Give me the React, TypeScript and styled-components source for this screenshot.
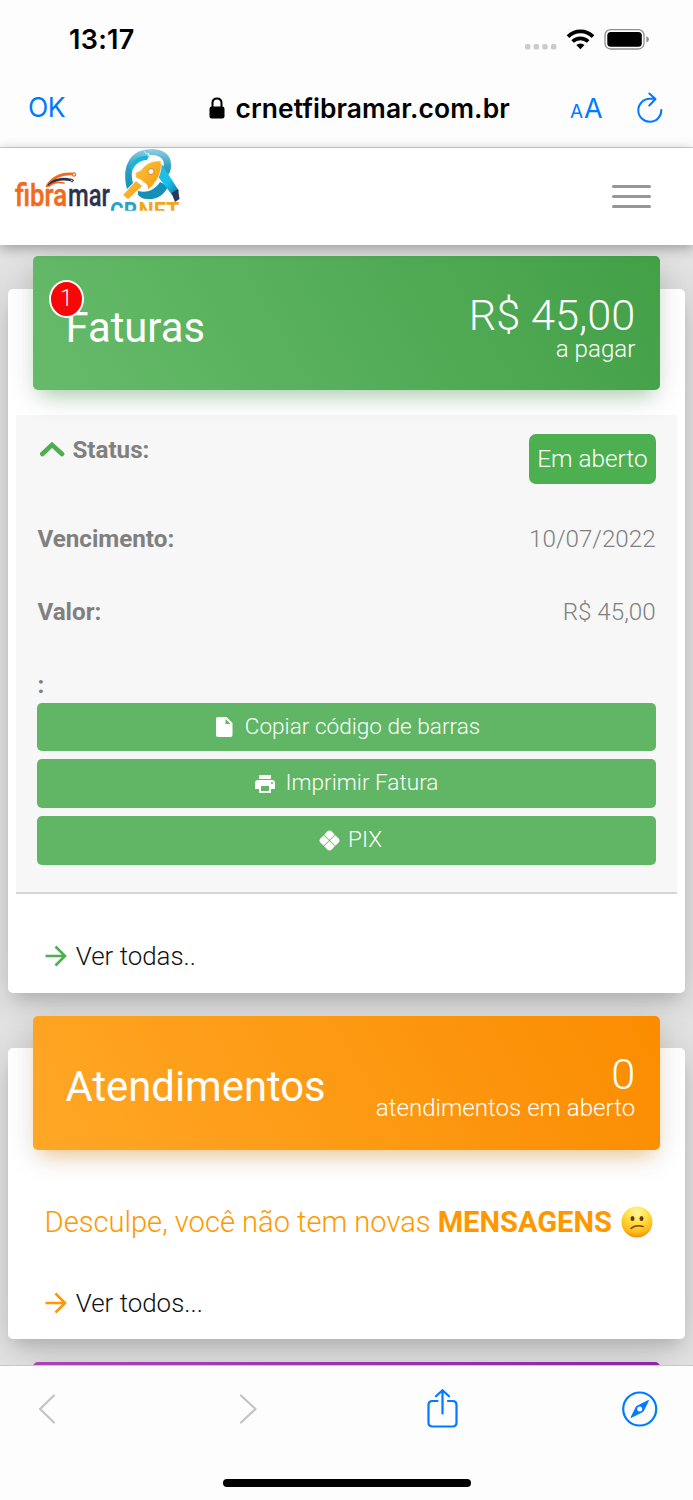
import React from "react";
import styled, { createGlobalStyle } from "styled-components";

const Global = createGlobalStyle`
  * { box-sizing: border-box; }
  body { margin: 0; background: #fdfdfd; }
`;

const Screen = styled.div`
  width: 693px;
  height: 1500px;
  display: flex;
  flex-direction: column;
  overflow: hidden;
  font-family: Roboto, sans-serif;
  font-weight: 300;
  background: #fdfdfd;
`;

const StatusBar = styled.div`
  flex: none;
  height: 80px;
  padding: 0 44px 0 69px;
  display: flex;
  align-items: center;
  justify-content: space-between;
  font: 600 27px/80px Inter, sans-serif;
  color: #000;
`;

const Clock = styled.span`
  letter-spacing: 0.3px;
`;

const StatusIcons = styled.div`
  display: flex;
  align-items: center;
  height: 80px;
`;

const AddressBar = styled.div`
  flex: none;
  height: 68px;
  padding: 0 30px 0 28px;
  display: grid;
  grid-template-columns: 180px 1fr 34px 59px;
  align-items: center;
  border-bottom: 1px solid #d2d2d2;
  font-family: Inter, sans-serif;
  font-weight: 400;
  color: #007aff;
`;

const Done = styled.span`
  font-size: 26.5px;
  line-height: 54px;
  padding-bottom: 14px;
  letter-spacing: -0.5px;
`;

const Host = styled.div`
  display: flex;
  align-items: center;
  gap: 10.500px;
  padding-bottom: 13px;
  color: #000;
  font-weight: 600;
  font-size: 26.400px;
  letter-spacing: 0.1px;
  white-space: nowrap;
`;

const TextSize = styled.div`
  display: flex;
  align-items: baseline;
  gap: 1px;
  padding-bottom: 12px;
  font-size: 27px;
`;

const SmallA = styled.span`
  font-size: 19px;
`;

const Reload = styled.div`
  display: flex;
  justify-content: flex-end;
  padding-bottom: 14px;
`;

const SiteHeader = styled.header`
  flex: none;
  position: relative;
  z-index: 2;
  height: 97px;
  padding: 0 42px 0 14px;
  display: flex;
  align-items: flex-start;
  justify-content: space-between;
  background: #fff;
  box-shadow: 0 3px 12px rgba(0, 0, 0, 0.32);
`;

const Burger = styled.div`
  margin-top: 37px;
  width: 39px;
  display: grid;
  gap: 7px;
`;

const BurgerLine = styled.span`
  height: 3px;
  border-radius: 2px;
  background: #969696;
`;

const Page = styled.main`
  flex: 1;
  min-height: 0;
  overflow: hidden;
  padding: 43.5px 8px 0;
  background: #e2e2e2;
`;

const Card = styled.section<{ $height: number }>`
  height: ${(p) => p.$height}px;
  margin-bottom: 55px;
  padding: 0 8px;
  border-radius: 5px;
  background: #fff;
  box-shadow: 0 6px 40px rgba(0, 0, 0, 0.14), 0 12px 16px -6px rgba(0, 0, 0, 0.15);
`;

const CardHeader = styled.div<{ $from: string; $to: string; $glow: string }>`
  position: relative;
  top: -32.5px;
  height: 134.3px;
  margin: 0 16.7px -8px 16.5px;
  padding: 0 25px 0 33px;
  display: flex;
  justify-content: space-between;
  border-radius: 5px;
  color: #fff;
  background: linear-gradient(60deg, ${(p) => p.$from}, ${(p) => p.$to});
  box-shadow: 0 7px 32px rgba(0, 0, 0, 0.1), 0 12px 18px -8px ${(p) => p.$glow};
`;

const Title = styled.h2`
  margin: 0;
  padding-top: 46.600px;
  font-size: 41.8px;
  line-height: 50px;
  font-weight: 400;
`;

const Summary = styled.div`
  padding-top: 34.600px;
  text-align: right;
`;

const Amount = styled.div`
  font-size: 43.3px;
  line-height: 50px;
`;

const Caption = styled.div`
  margin-top: -7px;
  font-size: 24.1px;
  line-height: 30px;
`;

const Badge = styled.span`
  position: absolute;
  left: 16.5px;
  top: 24px;
  width: 35px;
  height: 38px;
  border: 2px solid #fff;
  border-radius: 50%;
  background: #f90606;
  font-size: 23px;
  line-height: 34px;
  text-align: center;
`;

const Invoice = styled.div`
  height: 479px;
  padding: 19px 21.4px 0;
  background: #f7f7f7;
  border-bottom: 2px solid #d6d6d6;
  color: #808080;
`;

const Row = styled.div<{ $height: number }>`
  height: ${(p) => p.$height}px;
  display: flex;
  justify-content: space-between;
  align-items: flex-start;
  font-size: 24.2px;
  line-height: 33px;
`;

const Label = styled.b`
  font-weight: 700;
  display: flex;
  align-items: center;
  gap: 7px;
`;

const Chip = styled.span`
  width: 126.5px;
  height: 50px;
  border-radius: 7px;
  background: #4caf50;
  color: #fff;
  font-size: 24.3px;
  line-height: 49px;
  text-align: center;
`;

const Action = styled.button<{ $indent?: number }>`
  display: flex;
  align-items: center;
  justify-content: center;
  width: 100%;
  height: 48.6px;
  margin: 0 0 8.1px;
  padding: 0 0 0 ${(p) => p.$indent ?? 0}px;
  border: 0;
  border-radius: 5px;
  background: #60b664;
  color: #fff;
  font: 300 22.6px/46px Roboto, sans-serif;
`;

const ActionText = styled.span`
  padding-bottom: 1px;
`;

const Footer = styled.div<{ $top: number }>`
  margin-top: ${(p) => p.$top}px;
  padding-left: 28.8px;
  display: flex;
  align-items: center;
  gap: 8px;
  font-size: 25.900px;
  line-height: 36px;
  color: #111;
`;

const Notice = styled.p`
  margin: 28px 0 0;
  padding-left: 28.6px;
  display: flex;
  align-items: center;
  white-space: pre;
  font-size: 29.1px;
  line-height: 40px;
  color: #ff9800;

  b { font-weight: 700; }
`;

const BottomBar = styled.nav`
  flex: none;
  position: relative;
  z-index: 2;
  height: 135px;
  padding: 21px 35px 0 38px;
  display: grid;
  grid-template-rows: 44px 1fr;
  grid-template-columns: 201px 188px 1fr 36px;
  align-items: center;
  border-top: 1px solid #c8c8c8;
  background: #fdfdfd;
`;

const HomeIndicator = styled.div`
  grid-column: 1 / -1;
  align-self: end;
  width: 248px;
  height: 8px;
  margin: 0 0 13px 185px;
  border-radius: 4px;
  background: #000;
`;

const Arrow = ({ color }: { color: string }) => (
  <svg width="23" height="22" viewBox="0 0 23 22" fill="none" stroke={color} strokeWidth="2.600">
    <path d="M0.500 11H20M10.500 1.500L20 11L10.500 20.500" />
  </svg>
);

const Logo = () => (
  <svg width="170" height="90" viewBox="14 148 170 90">
    <defs>
      <linearGradient id="ring" x1="0" y1="0" x2="0" y2="1">
        <stop offset="0" stopColor="#8fd0e2" />
        <stop offset=".45" stopColor="#2f9fc0" />
        <stop offset="1" stopColor="#0f93bd" />
      </linearGradient>
      <linearGradient id="leg" x1="0" y1="0" x2="1" y2="1">
        <stop offset="0" stopColor="#2bb4d6" />
        <stop offset=".55" stopColor="#16c3ee" />
        <stop offset="1" stopColor="#1a6f9f" />
      </linearGradient>
      <linearGradient id="gold" x1="0" y1="0" x2="1" y2="1">
        <stop offset="0" stopColor="#ffc33a" />
        <stop offset="1" stopColor="#f39a10" />
      </linearGradient>
      <clipPath id="crop"><rect x="108" y="148" width="76" height="62.800" /></clipPath>
    </defs>
    <g fontFamily="Roboto, sans-serif" fontWeight="500" fontSize="31">
      <text x="15" y="206" fill="#f26a1b" stroke="#f26a1b" strokeWidth=".5" textLength="52" lengthAdjust="spacingAndGlyphs">fibra</text>
      <text x="68" y="206" fill="#2b3350" stroke="#2b3350" strokeWidth=".3" textLength="42" lengthAdjust="spacingAndGlyphs">mar</text>
    </g>
    <g fill="none" strokeLinecap="round">
      <path d="M47 186C53 177 61 173 73 174" stroke="#f26a1b" strokeWidth="2.600" />
      <path d="M49 185C55 179 62 178 71 180" stroke="#2b3350" strokeWidth="2.600" />
      <path d="M49 186C54 182 58 182 64 183" stroke="#f26a1b" strokeWidth="1.700" />
      <circle cx="74" cy="174.500" r="1.600" stroke="#f26a1b" strokeWidth="1.200" fill="#fff" />
      <circle cx="72" cy="180.500" r="1.300" stroke="#2b3350" strokeWidth="1" fill="#fff" />
    </g>
    <g clipPath="url(#crop)">
      <path d="M127 189C122 172 127 152 146 149.500C160 147 172 153 171 166C171 171 169 175 165 177L160 171C164 168 165 163 162 159C158 154 150 154 143 157C132 162 130 174 133 183Z" fill="url(#ring)" />
      <path d="M138 191C146 193 154 191 160 182L168 186C165 195 156 200 147 199C143 199 140 197 138 195Z" fill="#1490b8" />
      <path d="M143 149.500L150 157L149 153L146 154Z" fill="#fff" />
      <path d="M157 166L161 163L179 191L172 195L156 174Z" fill="url(#leg)" />
      <path d="M129 168C133 159 141 155 149 156L147 160C140 160 135 164 132 171Z" fill="#18b4e0" />
      <path d="M171.500 193L178 189L179.500 199L175 202Z" fill="#26375d" />
      <path d="M123 195L136 181L142 186L128 199Z" fill="url(#gold)" />
      <path d="M161 161C151 160 145 165 141 170L135 173L136 178L141 180L147 185L148 190L153 185C159 178 162 171 161 161Z" fill="url(#gold)" stroke="#fff" strokeWidth=".7" />
      <circle cx="151" cy="171.500" r="3" fill="#fff" stroke="#c98a2c" strokeWidth="1" />
      <g fontFamily="Roboto, sans-serif" fontWeight="700" fontSize="24">
        <text x="110" y="218.500" fill="#2aa2c2" textLength="27" lengthAdjust="spacingAndGlyphs">CR</text>
        <text x="138.500" y="218.500" fill="#f3a61b" textLength="41" lengthAdjust="spacingAndGlyphs">NET</text>
      </g>
    </g>
  </svg>
);

const ConfusedFace = () => (
  <svg width="32" height="32" viewBox="0 0 32 32">
    <defs>
      <radialGradient id="face" cx=".5" cy=".2" r=".85">
        <stop offset="0" stopColor="#fffa9a" />
        <stop offset=".4" stopColor="#ffe045" />
        <stop offset=".78" stopColor="#fdb717" />
        <stop offset="1" stopColor="#e07e0c" />
      </radialGradient>
    </defs>
    <circle cx="16" cy="16" r="15.500" fill="url(#face)" />
    <ellipse cx="11.500" cy="12.500" rx="2" ry="2.600" fill="#6a3507" />
    <ellipse cx="20.500" cy="12.500" rx="2" ry="2.600" fill="#6a3507" />
    <path d="M10 22.500C13 19.500 18 19.300 22 20.500" fill="none" stroke="#7d430b" strokeWidth="1.500" strokeLinecap="round" />
  </svg>
);

const Spacer = styled.span<{ $w: number }>`
  flex: none;
  width: ${(p) => p.$w}px;
`;

export default function App() {
  return (
    <Screen>
      <Global />
      <StatusBar>
        <Clock>13:17</Clock>
        <StatusIcons>
          <svg width="125" height="24" viewBox="524 28 125 24">
            <g fill="#cbcbcb">
              <rect x="525" y="44" width="5.500" height="5.500" rx="1.800" />
              <rect x="533.600" y="44" width="5.500" height="5.500" rx="1.800" />
              <rect x="542.200" y="44" width="5.500" height="5.500" rx="1.800" />
              <rect x="550.900" y="44" width="5.500" height="5.500" rx="1.800" />
            </g>
            <g fill="none" stroke="#000" strokeWidth="3.700">
              <path d="M568 36.600A17.500 17.500 0 0 1 593 36.600" />
              <path d="M572.600 41.500A11.500 11.500 0 0 1 588.200 41.500" />
            </g>
            <path d="M580.400 49.200L576.300 45A6 6 0 0 1 584.500 45Z" />
            <rect x="605" y="29.700" width="39" height="19.300" rx="5.500" fill="none" stroke="#8f8f8f" strokeWidth="1.300" />
            <rect x="607.300" y="32" width="34.500" height="14.800" rx="3.500" />
            <path d="M646.300 36.200Q649 37 649 39.300T646.300 42.400Z" fill="#8f8f8f" />
          </svg>
        </StatusIcons>
      </StatusBar>
      <AddressBar>
        <Done>OK</Done>
        <Host>
          <svg width="17" height="22" viewBox="0 0 17 22">
            <rect x="1.500" y="9.500" width="15" height="12" rx="2.200" />
            <path d="M4.500 10V6Q4.500 1.500 9 1.500T13.500 6V10" fill="none" stroke="#000" strokeWidth="2" />
          </svg>
          crnetfibramar.com.br
        </Host>
        <TextSize><SmallA>A</SmallA>A</TextSize>
        <Reload>
          <svg width="26" height="31" viewBox="0 0 26 31" fill="none" stroke="#007aff" strokeWidth="2" strokeLinecap="round" strokeLinejoin="round">
            <path d="M24.300 18A11.500 11.500 0 1 1 12.800 6.800H18M12.300 1.500L18.500 7L12.300 13.500" />
          </svg>
        </Reload>
      </AddressBar>
      <SiteHeader>
        <Logo />
        <Burger><BurgerLine /><BurgerLine /><BurgerLine /></Burger>
      </SiteHeader>
      <Page>
        <Card $height={704.5}>
          <CardHeader $from="#66bb6a" $to="#43a047" $glow="rgba(76,175,80,.4)">
            <Title>Faturas</Title>
            <Badge>1</Badge>
            <Summary>
              <Amount>R$ 45,00</Amount>
              <Caption>a pagar</Caption>
            </Summary>
          </CardHeader>
          <Invoice>
            <Row $height={89}>
              <Label>
                <svg width="28" height="18" viewBox="0 0 28 18" fill="none" stroke="#4caf50" strokeWidth="4.600">
                  <path d="M5.300 13L15 3.800L25 13" strokeLinecap="round" />
                </svg>
                Status:
              </Label>
              <Chip>Em aberto</Chip>
            </Row>
            <Row $height={73}><Label>Vencimento:</Label><span>10/07/2022</span></Row>
            <Row $height={73}><Label>Valor:</Label><span>R$ 45,00</span></Row>
            <Row $height={34}><Label>:</Label></Row>
            <Action $indent={3}>
              <svg width="17" height="20" viewBox="0 0 17 20">
                <path d="M2 0H10.500L16.500 6V18Q16.500 20 14.500 20H2Q0 20 0 18V2Q0 0 2 0Z" fill="#fff" />
                <path d="M9.500 2V7H14.500" fill="#60b664" />
              </svg>
              <Spacer $w={12} /><ActionText>Copiar código de barras</ActionText>
            </Action>
            <Action>
              <svg width="20" height="18" viewBox="0 0 20 18">
                <path d="M4 0H16V4H4ZM3 5H17Q20 5 20 8V14H16V18H4V14H0V8Q0 5 3 5Z" fill="#fff" />
                <rect x="6" y="11" width="8" height="5" fill="#60b664" />
                <circle cx="17" cy="8" r="1" fill="#60b664" />
              </svg>
              <Spacer $w={11} /><ActionText>Imprimir Fatura</ActionText>
            </Action>
            <Action $indent={8}>
              <svg width="21" height="21" viewBox="0 0 21 21">
                <g transform="rotate(45 10.500 10.500)" fill="#fff">
                  <path d="M5.800 2.600H10.100V10.100H2.600V5.800Q2.600 2.600 5.800 2.600Z" />
                  <path d="M10.900 2.600H15.200Q18.400 2.600 18.400 5.800V10.100H10.900Z" />
                  <path d="M2.600 10.900H10.100V18.400H5.800Q2.600 18.400 2.600 15.200Z" />
                  <path d="M10.900 10.900H18.400V15.200Q18.400 18.400 15.200 18.400H10.900Z" />
                </g>
              </svg>
              <Spacer $w={8} /><ActionText>PIX</ActionText>
            </Action>
          </Invoice>
          <Footer $top={44.5}><Arrow color="#4caf50" />Ver todas..</Footer>
        </Card>
        <Card $height={291}>
          <CardHeader $from="#ffa726" $to="#fb8c00" $glow="rgba(255,152,0,.4)">
            <Title>Atendimentos</Title>
            <Summary>
              <Amount>0</Amount>
              <Caption>atendimentos em aberto</Caption>
            </Summary>
          </CardHeader>
          <Notice>
            <span>Desculpe, você não tem novas <b>MENSAGENS</b></span>
            <Spacer $w={9} />
            <ConfusedFace />
          </Notice>
          <Footer $top={43}><Arrow color="#ff9800" />Ver todos...</Footer>
        </Card>
        <Card $height={100}>
          <CardHeader $from="#ab47bc" $to="#8e24aa" $glow="rgba(156,39,176,.4)" />
        </Card>
      </Page>
      <BottomBar>
        <svg width="20" height="32" viewBox="0 0 20 32" fill="none" stroke="#c4c4c4" strokeWidth="2.300" strokeLinecap="round" strokeLinejoin="round">
          <path d="M16 2.500L2 16L16 29.500" />
        </svg>
        <svg width="20" height="32" viewBox="0 0 20 32" fill="none" stroke="#c4c4c4" strokeWidth="2.300" strokeLinecap="round" strokeLinejoin="round">
          <path d="M2 2.500L16.500 16L2 29.500" />
        </svg>
        <svg width="32" height="40" viewBox="0 0 32 40" fill="none" stroke="#007aff" strokeWidth="2.200" strokeLinecap="round" strokeLinejoin="round">
          <path d="M10.500 12H5.500Q1.500 12 1.500 16V33.500Q1.500 37.500 5.500 37.500H25.500Q29.500 37.500 29.500 33.500V16Q29.500 12 25.500 12H21M15.500 24.500V1.200M9 7.200L15.500 1.200L22 7.200" />
        </svg>
        <svg width="36" height="36" viewBox="0 0 36 36">
          <circle cx="17.700" cy="18" r="16.500" fill="none" stroke="#007aff" strokeWidth="2.200" />
          <path d="M26.500 9.500L21 20.500L9 26.500L14.500 15.500Z" fill="#007aff" stroke="#007aff" strokeLinejoin="round" />
          <circle cx="17.700" cy="18" r="2.500" fill="#fff" />
        </svg>
        <HomeIndicator />
      </BottomBar>
    </Screen>
  );
}
